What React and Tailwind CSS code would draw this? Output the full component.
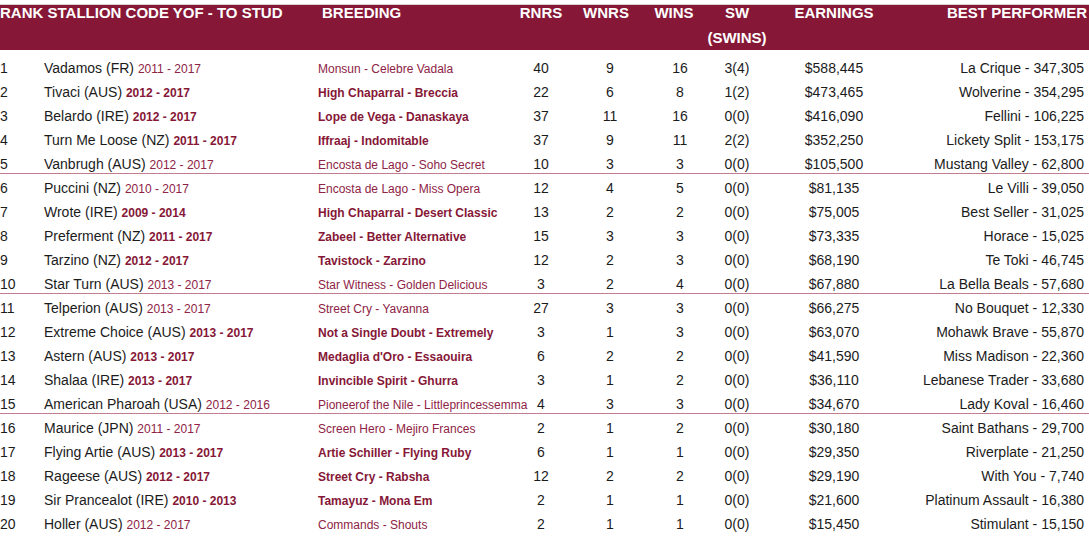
const rows = [
  ["1", "Vadamos (FR)", "2011 - 2017", "Monsun - Celebre Vadala", "40", "9", "16", "3(4)", "$588,445", "La Crique - 347,305"],
  ["2", "Tivaci (AUS)", "2012 - 2017", "High Chaparral - Breccia", "22", "6", "8", "1(2)", "$473,465", "Wolverine - 354,295"],
  ["3", "Belardo (IRE)", "2012 - 2017", "Lope de Vega - Danaskaya", "37", "11", "16", "0(0)", "$416,090", "Fellini - 106,225"],
  ["4", "Turn Me Loose (NZ)", "2011 - 2017", "Iffraaj - Indomitable", "37", "9", "11", "2(2)", "$352,250", "Lickety Split - 153,175"],
  ["5", "Vanbrugh (AUS)", "2012 - 2017", "Encosta de Lago - Soho Secret", "10", "3", "3", "0(0)", "$105,500", "Mustang Valley - 62,800"],
  ["6", "Puccini (NZ)", "2010 - 2017", "Encosta de Lago - Miss Opera", "12", "4", "5", "0(0)", "$81,135", "Le Villi - 39,050"],
  ["7", "Wrote (IRE)", "2009 - 2014", "High Chaparral - Desert Classic", "13", "2", "2", "0(0)", "$75,005", "Best Seller - 31,025"],
  ["8", "Preferment (NZ)", "2011 - 2017", "Zabeel - Better Alternative", "15", "3", "3", "0(0)", "$73,335", "Horace - 15,025"],
  ["9", "Tarzino (NZ)", "2012 - 2017", "Tavistock - Zarzino", "12", "2", "3", "0(0)", "$68,190", "Te Toki - 46,745"],
  ["10", "Star Turn (AUS)", "2013 - 2017", "Star Witness - Golden Delicious", "3", "2", "4", "0(0)", "$67,880", "La Bella Beals - 57,680"],
  ["11", "Telperion (AUS)", "2013 - 2017", "Street Cry - Yavanna", "27", "3", "3", "0(0)", "$66,275", "No Bouquet - 12,330"],
  ["12", "Extreme Choice (AUS)", "2013 - 2017", "Not a Single Doubt - Extremely", "3", "1", "3", "0(0)", "$63,070", "Mohawk Brave - 55,870"],
  ["13", "Astern (AUS)", "2013 - 2017", "Medaglia d'Oro - Essaouira", "6", "2", "2", "0(0)", "$41,590", "Miss Madison - 22,360"],
  ["14", "Shalaa (IRE)", "2013 - 2017", "Invincible Spirit - Ghurra", "3", "1", "2", "0(0)", "$36,110", "Lebanese Trader - 33,680"],
  ["15", "American Pharoah (USA)", "2012 - 2016", "Pioneerof the Nile - Littleprincessemma", "4", "3", "3", "0(0)", "$34,670", "Lady Koval - 16,460"],
  ["16", "Maurice (JPN)", "2011 - 2017", "Screen Hero - Mejiro Frances", "2", "1", "2", "0(0)", "$30,180", "Saint Bathans - 29,700"],
  ["17", "Flying Artie (AUS)", "2013 - 2017", "Artie Schiller - Flying Ruby", "6", "1", "1", "0(0)", "$29,350", "Riverplate - 21,250"],
  ["18", "Rageese (AUS)", "2012 - 2017", "Street Cry - Rabsha", "12", "2", "2", "0(0)", "$29,190", "With You - 7,740"],
  ["19", "Sir Prancealot (IRE)", "2010 - 2013", "Tamayuz - Mona Em", "2", "1", "1", "0(0)", "$21,600", "Platinum Assault - 16,380"],
  ["20", "Holler (AUS)", "2012 - 2017", "Commands - Shouts", "2", "1", "1", "0(0)", "$15,450", "Stimulant - 15,150"],
];

const cols = "grid grid-cols-[44px_274px_198px_50px_88px_52px_62px_132px_184px]";

function Row({ r, i }) {
  const strong = [1, 2, 3].includes(i % 5);
  const sep = i % 5 === 4 && i < 19;
  const accent = strong ? "font-bold text-[#861737]" : "font-normal text-[#8e2345]";
  return (
    <div className={`${cols} h-6 items-baseline pt-[6px] leading-4 ${sep ? "border-b border-[#c27d90]" : ""}`}>
      <div className="text-[14px]">{r[0]}</div>
      <div className="whitespace-nowrap text-[14px]">
        {r[1]} <span className={`text-[12px] ${accent}`}>{r[2]}</span>
      </div>
      <div className={`whitespace-nowrap text-[12px] ${accent}`}>{r[3]}</div>
      <div className="text-center text-[14px]">{r[4]}</div>
      <div className="text-center text-[14px]">{r[5]}</div>
      <div className="text-center text-[14px]">{r[6]}</div>
      <div className="text-center text-[14px]">{r[7]}</div>
      <div className="text-center text-[14px]">{r[8]}</div>
      <div className="whitespace-nowrap text-right text-[14px]">{r[9]}</div>
    </div>
  );
}

export default function App() {
  return (
    <div className="h-[552px] w-[1089px] overflow-hidden bg-white pt-1 text-[#1b1b1b] [font-family:'Liberation_Sans',Arial,sans-serif]">
      <div className={`${cols} h-[46px] border-t border-[#d4d4d4] bg-[#861737] text-[15px] font-bold uppercase leading-[14px] text-white`}>
        <div className="col-span-2 whitespace-nowrap pt-[1px]">Rank Stallion Code YOF - To Stud</div>
        <div className="pl-1 pt-[1px]">Breeding</div>
        <div className="pt-[1px] text-center">Rnrs</div>
        <div className="pr-2 pt-[1px] text-center">Wnrs</div>
        <div className="pr-3 pt-[1px] text-center">Wins</div>
        <div className="flex flex-col items-center pt-[1px]">
          <span>SW</span>
          <span className="mt-[11px]">(Swins)</span>
        </div>
        <div className="pt-[1px] text-center">Earnings</div>
        <div className="-mr-[3px] pt-[1px] text-right">Best Performer</div>
      </div>
      <div className="mt-[4px]">
        {rows.map((r, i) => (
          <Row key={r[0]} r={r} i={i} />
        ))}
      </div>
    </div>
  );
}
